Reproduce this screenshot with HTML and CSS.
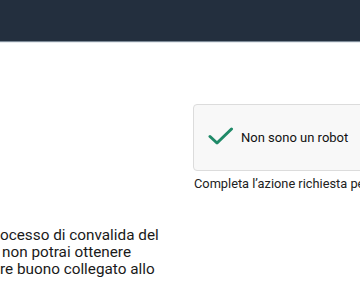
FILE: index.html
```html
<!DOCTYPE html>
<html lang="it">
<head>
<meta charset="utf-8">
<link rel="stylesheet" href="styles.css">
</head>
<body>
<header class="topbar"></header>
<main class="page">
  <section class="left-col">
    <p class="notice"><span class="line">ocesso di convalida del</span><span class="line indent">non potrai ottenere</span><span class="line">re buono collegato allo</span></p>
  </section>
  <section class="right-col">
    <div class="captcha">
      <svg class="check" width="26" height="20" viewBox="0 0 26 20" aria-hidden="true">
        <path d="M2 10.5 L9 17 L23.5 3" fill="none" stroke="#1f8a68" stroke-width="3" stroke-linecap="round" stroke-linejoin="round"/>
      </svg>
      <span class="captcha-label">Non sono un robot</span>
    </div>
    <p class="caption">Completa l’azione richiesta per continuare</p>
  </section>
</main>
</body>
</html>
```
FILE: styles.css
```css
html, body {
  margin: 0;
  padding: 0;
  background: #ffffff;
  overflow: hidden;
  width: 360px;
  height: 308px;
}
body {
  font-family: Roboto, "Liberation Sans", Arial, sans-serif;
  color: #111111;
}
.topbar {
  height: 41px;
  background: #232f3e;
  border-bottom: 1px solid #7d8a97;
  box-shadow: 0 1px 0 #e6eaee;
}
.page {
  display: flex;
  align-items: flex-start;
  width: 500px;
}
.left-col {
  width: 193px;
  flex: none;
  padding-top: 185px;
}
.notice {
  margin: 0;
  font-size: 15.3px;
  line-height: 17px;
  color: #1a1a1a;
  white-space: nowrap;
}
.line {
  display: block;
}
.indent {
  padding-left: 2px;
}
.right-col {
  flex: none;
  width: 230px;
  padding-top: 62px;
}
.captcha {
  height: 65px;
  border: 1px solid #dcdcdc;
  border-radius: 4px;
  background: #f8f8f8;
  display: flex;
  align-items: center;
  padding-left: 14px;
  gap: 7px;
  box-sizing: content-box;
}
.check {
  display: block;
  margin-top: -4px;
}
.captcha-label {
  font-size: 13px;
  color: #111111;
}
.caption {
  margin: 5px 0 0 1px;
  font-size: 12.8px;
  line-height: 16px;
  color: #222222;
  white-space: nowrap;
}
```
